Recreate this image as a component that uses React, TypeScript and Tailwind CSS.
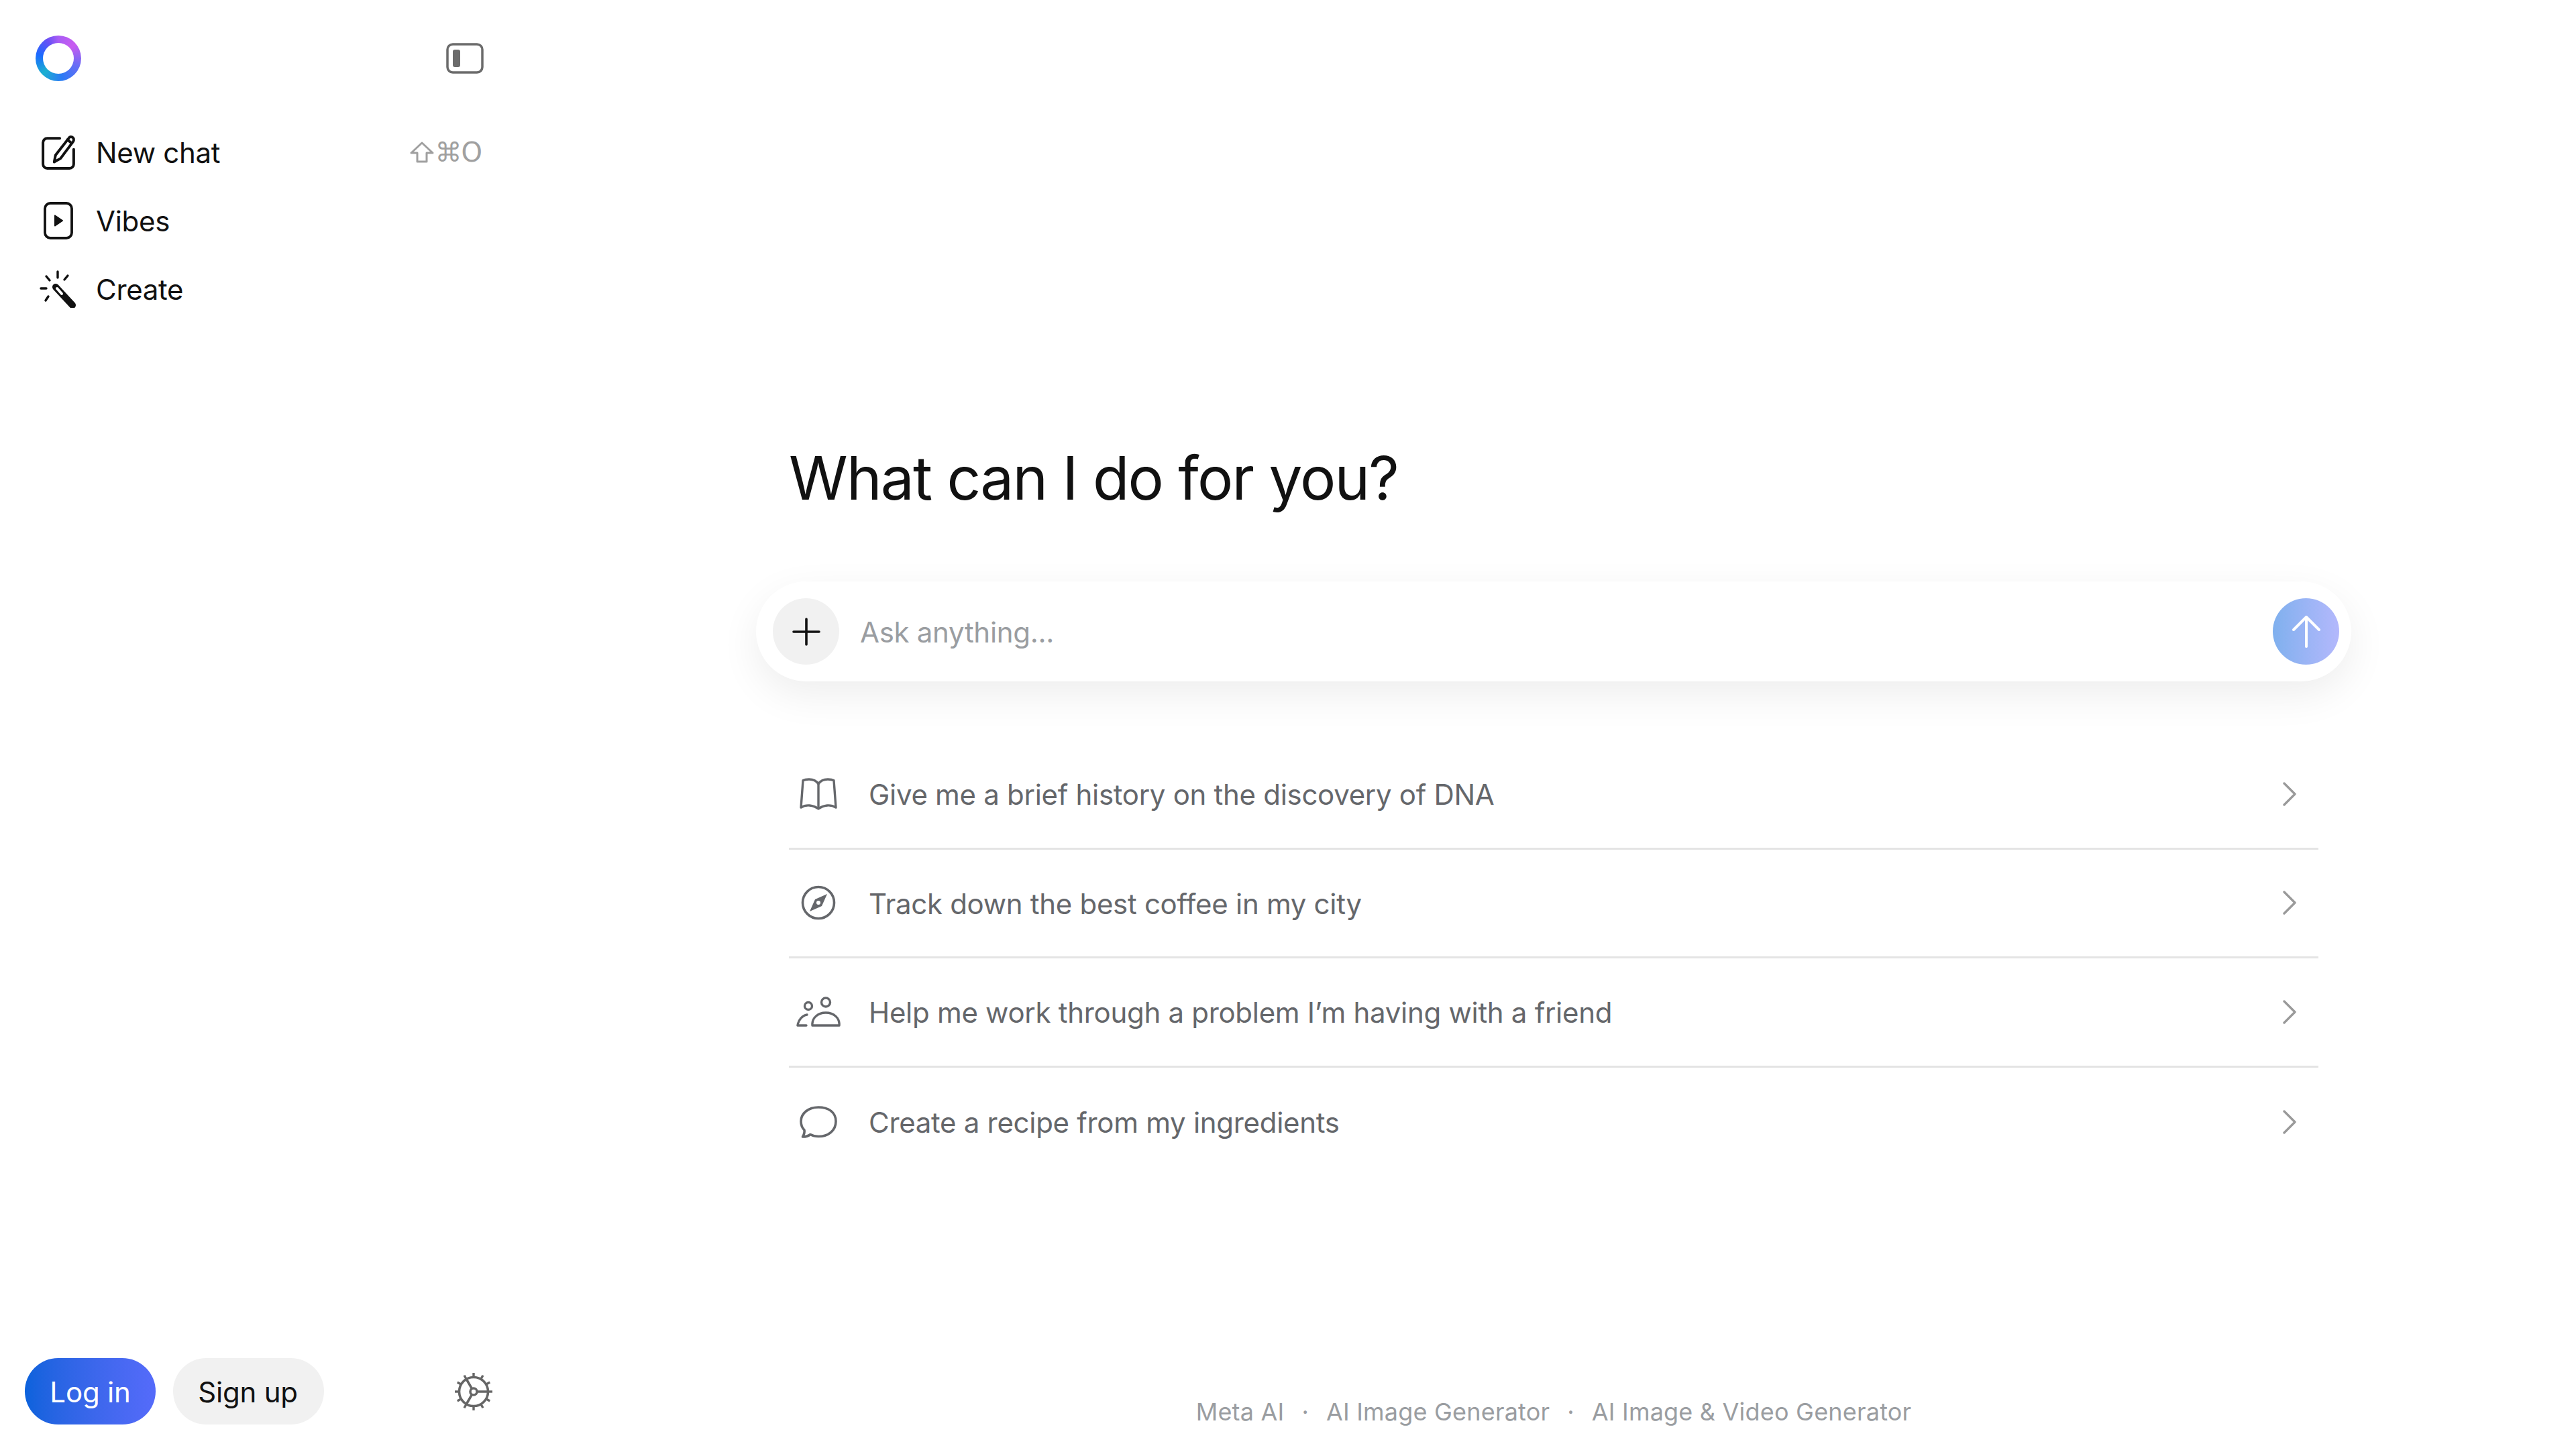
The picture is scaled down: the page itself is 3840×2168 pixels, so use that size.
import React from 'react';

const teeth = Array.from({ length: 12 }, (_, i) => i * 30);

const Logo = () => (
  <div className="w-[68px] h-[68px] rounded-full flex items-center justify-center bg-[conic-gradient(#a85cf5_0deg,#c95cf0_50deg,#6a6cf5_110deg,#2a7af5_170deg,#1bb0d0_225deg,#1a6aff_280deg,#6a50f5_330deg,#a85cf5_360deg)]">
    <div className="w-[46px] h-[46px] rounded-full bg-white" />
  </div>
);

const PanelIcon = () => (
  <svg width="56" height="46" viewBox="0 0 56 46" fill="none">
    <rect x="2" y="2" width="52" height="42" rx="8" stroke="#6b6b6b" strokeWidth="3.5" />
    <rect x="10" y="10" width="11" height="26" rx="3" fill="#6b6b6b" />
  </svg>
);

const EditIcon = () => (
  <svg width="52" height="52" viewBox="0 0 50 50" fill="none" stroke="#111" strokeWidth="3.8" strokeLinecap="round" strokeLinejoin="round">
    <path d="M27 5H9a6 6 0 0 0-6 6v31a6 6 0 0 0 6 6h32a6 6 0 0 0 6-6V21" />
    <path d="M41 3.5a4 4 0 0 1 6 2.5c.3 1.5-.2 2.8-1 4L28 34l-9 5 2-10z" />
    <path d="M38 7l6 5" />
  </svg>
);

const PlayIcon = () => (
  <svg width="44" height="56" viewBox="0 0 44 56" fill="none">
    <rect x="2" y="2" width="40" height="52" rx="8" stroke="#111" strokeWidth="3.8" />
    <path d="M16 20.5a1 1 0 0 1 1.6-.8l11 7.5a1 1 0 0 1 0 1.6l-11 7.5a1 1 0 0 1-1.6-.8z" fill="#111" />
  </svg>
);

const WandIcon = () => (
  <svg width="56" height="56" viewBox="0 0 56 56" fill="none" stroke="#111" strokeLinecap="round">
    <path d="M27 2v9M10 9l5 6M42 8l-5 6M2 27h8M9 45l4-6" strokeWidth="3.4" />
    <path d="M24 25l25 27" strokeWidth="10" />
    <path d="M26 27l7 8" stroke="#fff" strokeWidth="4" />
  </svg>
);

const ShiftIcon = () => (
  <svg width="36" height="32" viewBox="0 0 36 32" fill="none" stroke="#a0a0a0" strokeWidth="3" strokeLinejoin="round">
    <path d="M18 2L2 17h9v13h14V17h9z" />
  </svg>
);

const BookIcon = () => (
  <svg width="56" height="48" viewBox="0 0 56 48" fill="none" stroke="#65676b" strokeWidth="3.4" strokeLinejoin="round" strokeLinecap="round">
    <path d="M28 9C25 4 20 2 14 2c-3.500 0-7 .6-9 1.800L2 44c4-2.500 8-3.500 13-3 5 .5 9 2 13 5 4-3 8-4.500 13-5 5-.5 9 .5 13 3L51 3.800C49 2.600 45.500 2 42 2c-6 0-11 2-14 7z" />
    <path d="M28 9v36" />
  </svg>
);

const CompassIcon = () => (
  <svg width="52" height="52" viewBox="0 0 52 52" fill="none">
    <circle cx="26" cy="26" r="23.500" stroke="#65676b" strokeWidth="3.600" />
    <path d="M39 13L31 31 13 39l8-18zM26 23a3 3 0 1 0 0 6 3 3 0 0 0 0-6z" fill="#65676b" fillRule="evenodd" />
  </svg>
);

const PeopleIcon = () => (
  <svg width="66" height="46" viewBox="0 0 66 46" fill="none" stroke="#65676b" strokeWidth="3.4" strokeLinecap="round" strokeLinejoin="round">
    <circle cx="18" cy="14" r="5.500" />
    <circle cx="44" cy="8.500" r="6.500" />
    <path d="M24 43c-1-11 8-19 20-19s21 8 20 19z" />
    <path d="M16 27C9 28 3 35 2 43h13" />
  </svg>
);

const ChatIcon = () => (
  <svg width="56" height="48" viewBox="0 0 56 48" fill="none" stroke="#65676b" strokeWidth="3.600" strokeLinejoin="round">
    <path d="M28 2C13 2 2 11 2 23c0 5 2 10 5 13 .6 3-.6 7-2.500 10 4.500 0 8.500-1 11.500-3.500 3.500 2 7.500 3 12 3 15 0 26-9 26-22.500S43 2 28 2z" />
  </svg>
);

const Chevron = () => (
  <svg width="20" height="36" viewBox="0 0 20 36" fill="none" stroke="#9a9a9a" strokeWidth="3.400" strokeLinecap="round" strokeLinejoin="round">
    <path d="M2 2l16 16L2 34" />
  </svg>
);

const GearIcon = () => (
  <svg width="58" height="58" viewBox="0 0 58 58" fill="none" stroke="#666" strokeWidth="3.600">
    <circle cx="29" cy="29" r="21.500" />
    <circle cx="29" cy="29" r="5" />
    <path d="M34 29h17M26.500 33.300L18 48M26.500 24.700L18 10" />
    {teeth.map((deg) => (
      <path key={deg} d="M29 1v7" strokeWidth="3.400" transform={`rotate(${deg} 29 29)`} />
    ))}
  </svg>
);

const navItems = [
  { label: 'New chat', icon: <EditIcon />, shortcut: '⌘O' },
  { label: 'Vibes', icon: <PlayIcon /> },
  { label: 'Create', icon: <WandIcon /> },
];

const suggestions = [
  { label: 'Give me a brief history on the discovery of DNA', icon: <BookIcon /> },
  { label: 'Track down the best coffee in my city', icon: <CompassIcon /> },
  { label: 'Help me work through a problem I’m having with a friend', icon: <PeopleIcon /> },
  { label: 'Create a recipe from my ingredients', icon: <ChatIcon /> },
];

const footerLinks = ['Meta AI', 'AI Image Generator', 'AI Image & Video Generator'];

export default function App() {
  return (
    <div className="flex h-[2168px] w-full overflow-hidden bg-white font-['Inter',sans-serif]">
      {/* Sidebar */}
      <aside className="flex w-[760px] shrink-0 flex-col">
        <div className="flex items-center justify-between pl-[53px] pr-[39px] pt-[53px]">
          <Logo />
          <PanelIcon />
        </div>

        <nav className="mt-[55px] flex flex-col">
          {navItems.map((item) => (
            <div key={item.label} className="flex h-[102px] items-center gap-[27px] pl-[58px] pr-[42px]">
              <div className="flex w-[58px] justify-center">{item.icon}</div>
              <span className="pt-[1px] text-[42px] tracking-[-0.3px] text-[#111]">{item.label}</span>
              {item.shortcut && (
                <span className="ml-auto flex items-center gap-[2px] font-['DejaVu_Sans',sans-serif] text-[40px] tracking-[-1px] text-[#a0a0a0]">
                  <ShiftIcon />
                  {item.shortcut}
                </span>
              )}
            </div>
          ))}
        </nav>

        <div className="mt-auto flex items-center gap-[26px] pb-[44px] pl-[37px] pr-[25px]">
          <button className="h-[99px] w-[195px] rounded-full bg-gradient-to-r from-[#0a62dc] to-[#556bfa] pt-[1px] text-[42px] tracking-[-0.2px] text-white">Log in</button>
          <button className="h-[99px] w-[225px] rounded-full bg-[#f1f1f1] pr-[2px] pt-[1px] text-[42px] tracking-[-0.2px] text-[#111]">Sign up</button>
          <div className="ml-auto">
            <GearIcon />
          </div>
        </div>
      </aside>

      {/* Main */}
      <main className="ml-[416px] flex w-[2280px] flex-col pt-[655px]">
        <h1 className="text-[89px] leading-[116px] font-normal tracking-[-1.8px] text-[#111]">What can I do for you?</h1>

        <div className="-mx-[49px] mt-[96px] flex h-[149px] items-center rounded-full bg-white pl-[25px] pr-[18px] shadow-[0_20px_60px_rgba(0,0,0,0.07)]">
          <div className="flex h-[99px] w-[99px] items-center justify-center rounded-full bg-[#f1f1f1]">
            <svg width="42" height="42" viewBox="0 0 42 42" stroke="#111" strokeWidth="3.600" strokeLinecap="round">
              <path d="M21 2v38M2 21h38" />
            </svg>
          </div>
          <span className="ml-[31px] pt-[1px] text-[42px] tracking-[-0.3px] text-[#9a9da1]">Ask anything...</span>
          <div className="ml-auto flex h-[99px] w-[99px] items-center justify-center rounded-full bg-gradient-to-r from-[#7fb0ee] to-[#b3b8fc]">
            <svg width="44" height="50" viewBox="0 0 44 50" fill="none" stroke="#fff" strokeWidth="4" strokeLinecap="round" strokeLinejoin="round">
              <path d="M22 47V3M3 22L22 3l19 19" />
            </svg>
          </div>
        </div>

        <div className="mt-[88px] flex flex-col">
          {suggestions.map((s, i) => (
            <div
              key={s.label}
              className={`flex h-[162.5px] items-center gap-[31px] pr-[33px] ${i < suggestions.length - 1 ? 'border-b-[3px] border-[#e4e4e4]' : ''}`}
            >
              <div className="flex w-[88px] justify-center">{s.icon}</div>
              <span className="pt-[2px] text-[42px] tracking-[-0.3px] text-[#65676b]">{s.label}</span>
              <div className="ml-auto">
                <Chevron />
              </div>
            </div>
          ))}
        </div>

        <footer className="mt-auto flex items-center justify-center pb-[39px] text-[36px] leading-[48px] tracking-[0.2px] text-[#9a9da1]">
          {footerLinks.map((link, i) => (
            <React.Fragment key={link}>
              {i > 0 && <span className="px-[26px]">·</span>}
              <span>{link}</span>
            </React.Fragment>
          ))}
        </footer>
      </main>
    </div>
  );
}
